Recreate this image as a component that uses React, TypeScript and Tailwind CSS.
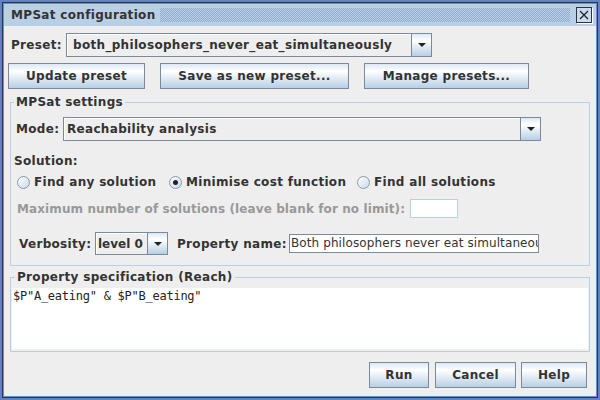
import React from 'react';

function Btn({ label, w }: { label: string; w: string }) {
    return (
        <button
            className={`${w} h-[26px] shrink-0 border border-[#7a8a99] bg-linear-to-b from-[#dde8f3] via-white via-30% to-[#b8cfe5] text-[12px] font-bold text-[#333333] leading-none`}
        >
            {label}
        </button>
    );
}

function Arrow() {
    return (
        <div className="w-[20px] h-full shrink-0 border-l border-[#7a8a99] bg-linear-to-b from-[#dde8f3] via-white via-30% to-[#b8cfe5] flex items-center justify-center">
            <svg width="8" height="4" viewBox="0 0 8 4">
                <path d="M0 0h8L4 4z" fill="#222" />
            </svg>
        </div>
    );
}

function Combo({ value, w, h, pl }: { value: string; w: string; h: string; pl: string }) {
    return (
        <div className={`${w} ${h} shrink-0 flex border border-[#7a8a99] bg-[#eeeeee]`}>
            <div className={`${pl} flex-1 min-w-0 flex items-center shadow-[inset_1px_1px_0_white] whitespace-nowrap text-[12px] font-bold text-[#333333]`}>
                {value}
            </div>
            <Arrow />
        </div>
    );
}

function Radio({ label, checked, w }: { label: string; checked?: boolean; w: string }) {
    return (
        <div className={`${w} shrink-0 flex items-center gap-[4px]`}>
            <div className="w-[13px] h-[13px] rounded-full border border-[#8a99a8] bg-linear-to-br from-white to-[#c9d9ea] flex items-center justify-center">
                {checked && <div className="w-[5px] h-[5px] rounded-full bg-[#222]" />}
            </div>
            <span className="text-[12px] font-bold text-[#333333] whitespace-nowrap">{label}</span>
        </div>
    );
}

export default function App() {
    return (
        <div className="w-[600px] h-[400px] bg-[#6382bf] p-[2px] font-['DejaVu_Sans',sans-serif] tracking-[0.32px]">
            <div className="h-full border border-[#26365a] p-[1px] bg-[#6f8dc8]">
                <div className="h-full flex flex-col bg-[#eeeeee]">
                    {/* title bar */}
                    <div className="h-[22px] shrink-0 bg-[#b8cfe5] flex items-center pl-[7px] pr-[4px]">
                        <span className="text-[12px] font-bold text-[#333333] whitespace-nowrap">MPSat configuration</span>
                        <div className="flex-1 h-[14px] ml-[4px] mr-[6px] bg-[conic-gradient(#93abcc_25%,transparent_0_50%,#93abcc_0_75%,transparent_0)] bg-[length:2px_2px]" />
                        <div className="w-[16px] h-[16px] border border-[#333333] shadow-[1px_1px_0_white] bg-[#c9dbee] flex items-center justify-center">
                            <svg width="10" height="10" viewBox="0 0 10 10">
                                <path d="M1 1L9 9M9 1L1 9" stroke="#222" strokeWidth="1.3" />
                            </svg>
                        </div>
                    </div>

                    {/* preset row */}
                    <div className="mt-[7px] pl-[7px] flex items-center">
                        <span className="w-[55px] text-[12px] font-bold text-[#333333]">Preset:</span>
                        <Combo value="both_philosophers_never_eat_simultaneously" w="w-[366px]" h="h-[24px]" pl="pl-[6px]" />
                    </div>

                    <div className="mt-[6px] pl-[4px] flex gap-[15px]">
                        <Btn label="Update preset" w="w-[137px]" />
                        <Btn label="Save as new preset..." w="w-[189px]" />
                        <Btn label="Manage presets..." w="w-[165px]" />
                    </div>

                    {/* MPSat settings */}
                    <fieldset className="mt-[6px] ml-[6px] w-[580px] border border-[#b8cfe5] pb-[10px]">
                        <legend className="ml-[3px] px-[2px] text-[12px] font-bold leading-[14px] text-[#333333]">MPSat settings</legend>
                        <div className="mt-[8px] pl-[5px] flex items-center">
                            <span className="w-[47px] text-[12px] font-bold text-[#333333]">Mode:</span>
                            <Combo value="Reachability analysis" w="w-[478px]" h="h-[24px]" pl="pl-[3px]" />
                        </div>
                        <div className="mt-[13px] pl-[3px] text-[12px] font-bold leading-[15px] text-[#333333]">Solution:</div>
                        <div className="mt-[5px] pl-[6px] h-[16px] flex items-center">
                            <Radio label="Find any solution" w="w-[152px]" />
                            <Radio label="Minimise cost function" checked w="w-[188px]" />
                            <Radio label="Find all solutions" w="w-[150px]" />
                        </div>
                        <div className="mt-[9px] pl-[6px] h-[19px] flex items-center">
                            <span className="w-[393px] whitespace-nowrap text-[12px] font-bold tracking-[0.1px] text-[#999999]">
                                Maximum number of solutions (leave blank for no limit):
                            </span>
                            <div className="w-[48px] h-[19px] border border-[#b8cfe5] bg-white" />
                        </div>
                        <div className="mt-[14px] pl-[8px] h-[23px] flex items-center">
                            <span className="w-[76px] text-[12px] font-bold text-[#333333]">Verbosity:</span>
                            <div className="tracking-[0px]">
                                <Combo value="level 0" w="w-[73px]" h="h-[23px]" pl="pl-[2px]" />
                            </div>
                            <span className="ml-[9px] w-[112px] whitespace-nowrap text-[12px] font-bold text-[#333333]">Property name:</span>
                            <div className="w-[250px] h-[19px] border border-[#7a8a99] bg-white pl-[1px] overflow-hidden whitespace-nowrap text-[12px] leading-[17px] tracking-[0.1px] text-[#333333]">
                                Both philosophers never eat simultaneously
                            </div>
                        </div>
                    </fieldset>

                    {/* Property specification */}
                    <fieldset className="mt-[4px] ml-[6px] w-[580px] border border-[#b8cfe5] px-[1px] pb-[2px]">
                        <legend className="ml-[3px] px-[2px] text-[12px] font-bold leading-[14px] text-[#333333]">Property specification (Reach)</legend>
                        <div className="mt-[4px] h-[61px] bg-white pl-[1px] pt-[1px] font-['DejaVu_Sans_Mono',monospace] text-[12px] leading-[14px] tracking-[-0.25px] text-[#222]">
                            $P"A_eating" &amp; $P"B_eating"
                        </div>
                    </fieldset>

                    <div className="mt-[10px] pr-[9px] flex justify-end">
                        <Btn label="Run" w="w-[60px]" />
                        <div className="w-[6px]" />
                        <Btn label="Cancel" w="w-[81px]" />
                        <div className="w-[5px]" />
                        <Btn label="Help" w="w-[66px]" />
                    </div>
                </div>
            </div>
        </div>
    );
}
